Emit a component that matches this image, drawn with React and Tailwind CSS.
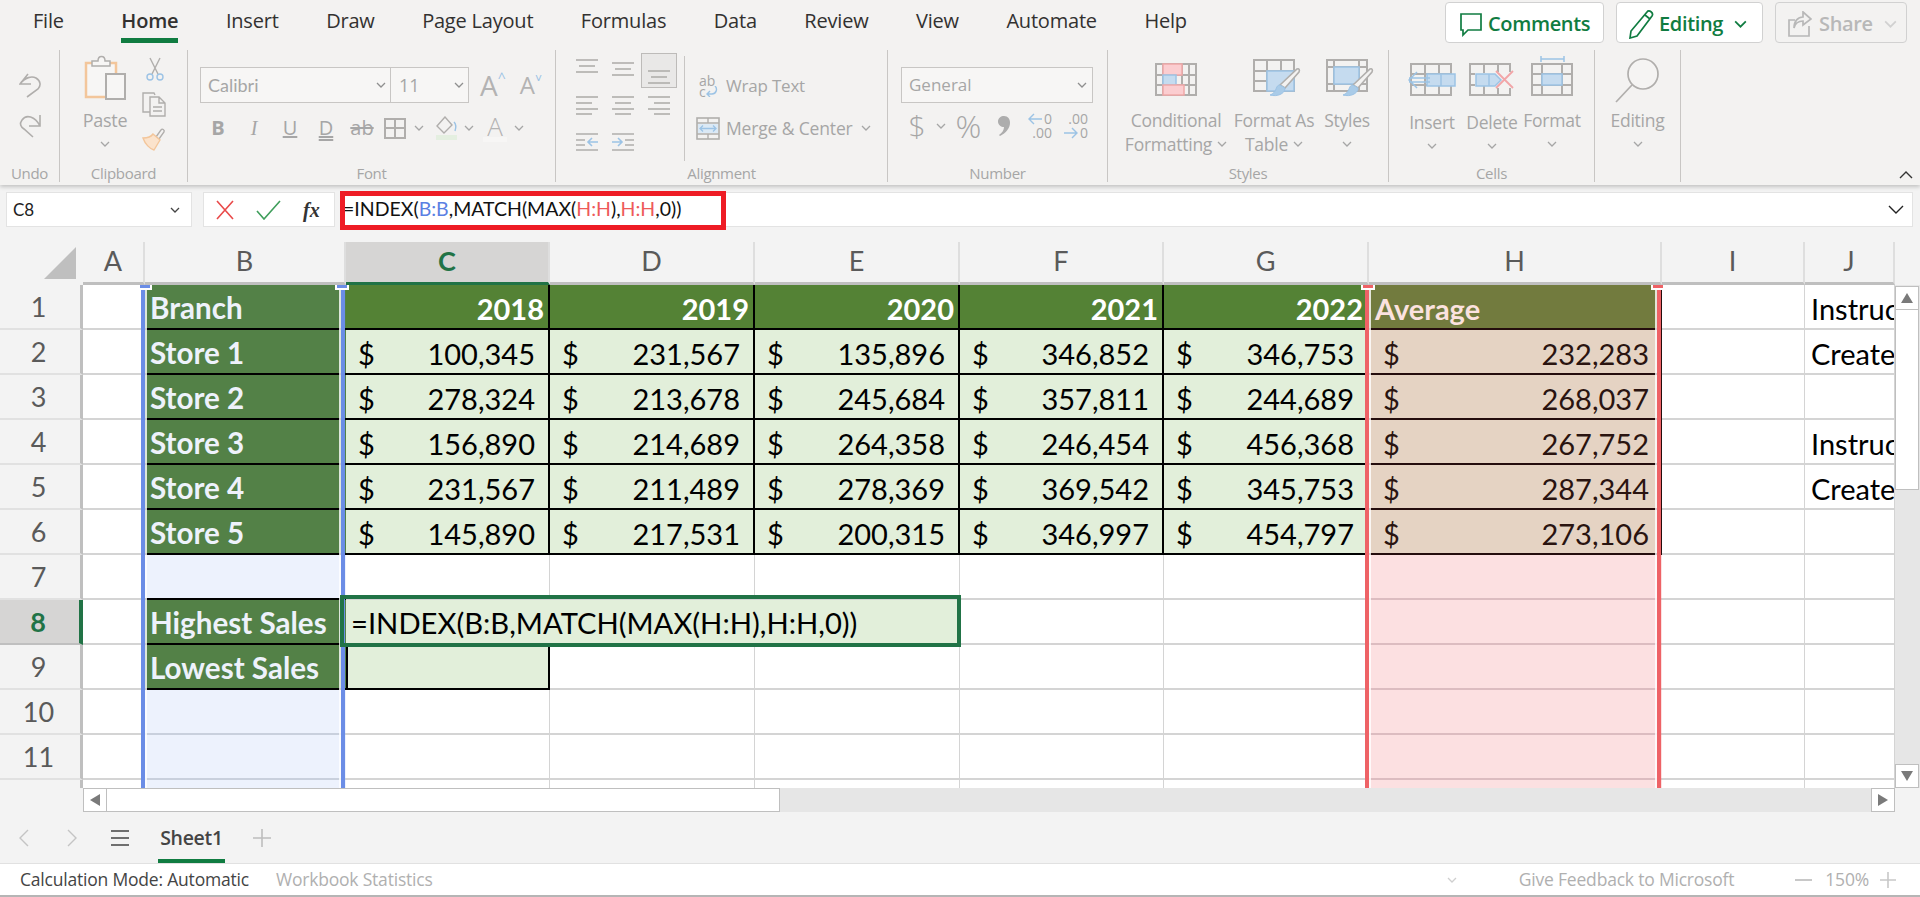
import React from 'react';

const ui = "font-['Open_Sans',sans-serif]";
const gray = '#b0aeac';
const blue = '#9cc3e5';
const blueFill = '#c5dbef';
const pink = '#f0a8a8';
const pinkFill = '#fbcdd0';

const tabs = ['File', 'Home', 'Insert', 'Draw', 'Page Layout', 'Formulas', 'Data', 'Review', 'View', 'Automate', 'Help'];

const stores = [
  ['Store 1', '100,345', '231,567', '135,896', '346,852', '346,753', '232,283'],
  ['Store 2', '278,324', '213,678', '245,684', '357,811', '244,689', '268,037'],
  ['Store 3', '156,890', '214,689', '264,358', '246,454', '456,368', '267,752'],
  ['Store 4', '231,567', '211,489', '278,369', '369,542', '345,753', '287,344'],
  ['Store 5', '145,890', '217,531', '200,315', '346,997', '454,797', '273,106'],
];

function Chevron({ color = '#a6a6a6', w = 10, h = 6 }) {
  return (
    <svg width={w} height={h} viewBox="0 0 10 6" fill="none" stroke={color} strokeWidth="1.3" className="shrink-0">
      <path d="M1 1l4 4 4-4" />
    </svg>
  );
}

function Brush() {
  return (
    <g>
      <path d="M44 10 C46 9 47 11 46 13 L32 29 L27 26 Z" fill="#f3f2f1" stroke={gray} strokeWidth="1.6" />
      <path d="M27 26 L32 29 C32 35 24 38 17 36 C20 35 22 33 23 30 C24 27 25 26 27 26 Z" fill="#a9cbe8" stroke="#9cc3e5" />
    </g>
  );
}

function TableGrid({ v, h }) {
  return (
    <g fill="none" stroke={gray} strokeWidth="2">
      <rect x="1" y="1" width="40" height="31" />
      {v.map((x) => <path key={x} d={`M${x} 1V32`} />)}
      {h.map((y) => <path key={y} d={`M1 ${y}H41`} />)}
    </g>
  );
}

function CondFormat() {
  return (
    <svg width="42" height="34" viewBox="0 0 42 34">
      <TableGrid v={[8, 27, 34]} h={[12, 22]} />
      <rect x="8" y="1" width="19" height="11" fill={pinkFill} stroke={pink} strokeWidth="1.5" />
      <rect x="8" y="12" width="13" height="10" fill={blueFill} stroke={blue} strokeWidth="1.5" />
      <rect x="8" y="22" width="21" height="10" fill={pinkFill} stroke={pink} strokeWidth="1.5" />
    </svg>
  );
}

function FormatTable() {
  return (
    <svg width="48" height="38" viewBox="0 0 48 38">
      <TableGrid v={[14, 28]} h={[12, 22]} />
      <rect x="14" y="12" width="27" height="20" fill={blueFill} stroke={blue} strokeWidth="1.5" />
      <Brush />
    </svg>
  );
}

function CellStyles() {
  return (
    <svg width="48" height="38" viewBox="0 0 48 38">
      <TableGrid v={[8, 33]} h={[8, 25]} />
      <rect x="8" y="8" width="25" height="17" fill={blueFill} stroke={blue} strokeWidth="1.5" />
      <Brush />
    </svg>
  );
}

function InsertIcon() {
  return (
    <svg width="48" height="41" viewBox="0 0 48 41">
      <g transform="translate(2 7)"><TableGrid v={[15, 29]} h={[11, 22]} /></g>
      <rect x="19" y="18" width="28" height="12" fill={blueFill} stroke={blue} strokeWidth="1.5" />
      <path d="M33 18V30" stroke={blue} strokeWidth="1.5" />
      <path d="M9 16 L1 24 L9 32 M1 22 H22 M1 26 H22" fill="none" stroke={blue} strokeWidth="1.5" />
    </svg>
  );
}

function DeleteIcon() {
  return (
    <svg width="46" height="41" viewBox="0 0 46 41">
      <g transform="translate(0 7)"><TableGrid v={[15, 29]} h={[11, 22]} /></g>
      <rect x="6" y="17" width="32" height="13" fill="#f3f2f1" />
      <rect x="28" y="16" width="15" height="16" fill="#f3f2f1" />
      <path d="M7 18 H26 L32 24 L26 30 H7 Z" fill={blueFill} stroke={blue} strokeWidth="1.5" />
      <path d="M20 18V30" stroke={blue} strokeWidth="1.5" />
      <path d="M27 15 L44 32 M44 15 L27 32" stroke="#f2a5a7" strokeWidth="1.8" />
    </svg>
  );
}

function FormatIcon() {
  return (
    <svg width="42" height="41" viewBox="0 0 42 41">
      <path d="M10 3H33 M10 0V6 M33 0V6" stroke={blue} strokeWidth="1.5" />
      <g transform="translate(0 7)"><TableGrid v={[11, 31]} h={[11, 22]} /></g>
      <rect x="11" y="18" width="20" height="11" fill={blueFill} stroke={blue} strokeWidth="1.5" />
    </svg>
  );
}

function AlignIcon({ lines }) {
  return (
    <svg width="22" height="20" viewBox="0 0 22 20" fill="none" stroke={gray} strokeWidth="1.6">
      {lines.map((l, i) => <path key={i} d={`M${l[0]} ${l[2]}H${l[1]}`} />)}
    </svg>
  );
}

function Group({ w, label, children, pad }) {
  return (
    <div className={`${w} h-[132px] flex flex-col border-r border-[#c8c6c4] shrink-0`}>
      <div className={`h-[115px] flex ${pad}`}>{children}</div>
      <div className="h-[17px] text-center text-[15px] leading-[17px] tracking-[-0.3px] text-[#a6a6a6]">{label}</div>
    </div>
  );
}

function BigButton({ icon, lines, w, top = 'mt-[11px]', iconH = 'h-[41px]' }) {
  return (
    <div className={`${w} flex flex-col items-center text-[#a6a6a6]`}>
      <div className={`${iconH} flex items-end`}>{icon}</div>
      <div className={`${top} flex flex-col items-center text-[17.5px] leading-[24px] tracking-[-0.25px] whitespace-nowrap`}>
        {lines.map((l, i) => <span key={i} className="h-[24px] flex items-center gap-[5px]">{l}</span>)}
      </div>
    </div>
  );
}

function Ribbon() {
  return (
    <div className="h-[132px] flex relative z-10">
      <Group w="w-[60px]" label="Undo" pad="pl-[19px] pt-[23px] flex-col">
        <svg width="23" height="25" viewBox="0 0 23 25" fill="none" stroke={gray} strokeWidth="1.6">
          <path d="M9 1L1 11L12 11M1 11C6 4 13 3 17 5C22 8 22 13 19 16L8 24" />
        </svg>
        <svg className="mt-[15px]" width="23" height="25" viewBox="0 0 23 25" fill="none" stroke={gray} strokeWidth="1.6">
          <path d="M21 2L21 13L10 13M21 13C16 3 7 1 3 7C0 11 2 14 5 16L14 24" />
        </svg>
      </Group>

      <Group w="w-[128px]" label="Clipboard" pad="">
        <div className="ml-[22px] w-[46px] flex flex-col items-center pt-[5px] text-[#a6a6a6]">
          <svg width="42" height="45" viewBox="0 0 42 45">
            <rect x="2" y="8" width="30" height="34" fill="#f7f6f5" stroke="#f3c69b" strokeWidth="2.5" />
            <path d="M8 6 H14 C14 0 21 0 21 6 H26 V11 H8 Z" fill="#f7f6f5" stroke={gray} strokeWidth="1.5" />
            <rect x="22" y="19" width="19" height="25" fill="#f7f6f5" stroke={gray} strokeWidth="2" />
          </svg>
          <span className="mt-[8px] text-[18px] leading-[24px] tracking-[-0.3px]">Paste</span>
          <span className="mt-[9px]"><Chevron /></span>
        </div>
        <div className="ml-[14px] flex flex-col items-center pt-[7px]">
          <svg width="18" height="24" viewBox="0 0 18 24" fill="none" strokeWidth="1.4">
            <path d="M4 1L12 17M14 1L6 17" stroke={gray} />
            <circle cx="4" cy="20" r="3" stroke={blue} />
            <circle cx="14" cy="20" r="3" stroke={blue} />
          </svg>
          <svg className="mt-[11px]" width="25" height="25" viewBox="0 0 25 25" fill="none" stroke={gray} strokeWidth="1.4">
            <path d="M8 20H1V1H12L13 3M8 5H17L23 11V24H8Z M17 5V11H23 M11 15H20 M11 19H20" />
          </svg>
          <svg className="mt-[10px]" width="25" height="24" viewBox="0 0 25 24" fill="none">
            <path d="M14 10L19 3C20 1 23 3 22 5L17 12L14 10Z" stroke={gray} strokeWidth="1.4" />
            <path d="M11 7L18 13L12 23C8 22 3 17 1 11C5 11 9 10 11 7Z" fill="#fbe3cc" stroke="#f3c69b" strokeWidth="1.4" />
          </svg>
        </div>
      </Group>

      <Group w="w-[368px]" label="Font" pad="flex-col pl-[12px] pt-[17px]">
        <div className="flex items-center">
          <div className="w-[269px] h-[36px] flex border border-[#c8c6c4] bg-[#f7f6f5] text-[18px] text-[#a6a6a6]">
            <div className="w-[190px] flex items-center justify-between pl-[7px] pr-[4px] border-r border-[#c8c6c4]">
              <span className="font-['Lato',sans-serif]">Calibri</span><Chevron color="#8f8f8f" />
            </div>
            <div className="flex-1 flex items-center justify-between pl-[8px] pr-[4px]">
              <span>11</span><Chevron color="#8f8f8f" />
            </div>
          </div>
          <span className="ml-[11px] flex text-[28px] leading-none text-[#b3b3b3]">A<span className="text-[14px] text-[#9cc3e5]">^</span></span>
          <span className="ml-[14px] flex text-[24px] leading-none text-[#b3b3b3]">A<span className="text-[12px] text-[#9cc3e5]">˅</span></span>
        </div>
        <div className="mt-[13px] flex items-center text-[#a6a6a6] h-[24px] text-[20px]">
          <span className="w-[36px] text-center font-bold">B</span>
          <span className="w-[36px] text-center italic font-['Liberation_Serif',serif]">I</span>
          <span className="w-[36px] text-center underline">U</span>
          <span className="w-[36px] text-center underline decoration-double">D</span>
          <span className="w-[36px] text-center line-through">ab</span>
          <svg className="ml-[4px]" width="22" height="21" viewBox="0 0 22 21" fill="none" stroke={gray} strokeWidth="2">
            <rect x="1" y="1" width="20" height="19" /><path d="M11 1V20M1 10H21" />
          </svg>
          <span className="ml-[8px]"><Chevron /></span>
          <svg className="ml-[12px]" width="22" height="24" viewBox="0 0 22 24" fill="none">
            <path d="M9 1L1 10L8 17L16 9Z" stroke={gray} strokeWidth="1.4" />
            <path d="M18 6C20 8 20 12 19 15" stroke={blue} strokeWidth="1.4" />
            <rect x="0" y="19" width="21" height="5" fill="#e4efe0" />
          </svg>
          <span className="ml-[6px]"><Chevron /></span>
          <span className="ml-[9px] w-[24px] flex flex-col items-center text-[26px] leading-[22px] font-light text-[#b3b3b3]">A<span className="w-[24px] h-[5px] bg-[#f7f6f5]" /></span>
          <span className="ml-[7px]"><Chevron /></span>
        </div>
      </Group>

      <Group w="w-[332px]" label="Alignment" pad="">
        <div className="ml-[13px] mt-[3px] w-[108px] grid grid-cols-3 grid-rows-[37px_37px_37px] h-[111px]">
          <div className="flex justify-center pt-[3px]"><AlignIcon lines={[[0, 22, 4], [3, 19, 10], [0, 22, 16]]} /></div>
          <div className="flex justify-center pt-[7px]"><AlignIcon lines={[[0, 22, 3], [3, 19, 9], [0, 22, 15]]} /></div>
          <div className="flex justify-center items-end h-[35px] bg-[#e9e8e7] border border-[#bdbbb9] pb-[1px]"><AlignIcon lines={[[0, 22, 5], [3, 19, 11], [0, 22, 17]]} /></div>
          <div className="flex justify-center pt-[5px]"><AlignIcon lines={[[0, 22, 2], [0, 16, 8], [0, 22, 14], [0, 16, 19]]} /></div>
          <div className="flex justify-center pt-[5px]"><AlignIcon lines={[[0, 22, 2], [3, 19, 8], [0, 22, 14], [3, 19, 19]]} /></div>
          <div className="flex justify-center pt-[5px]"><AlignIcon lines={[[0, 22, 2], [6, 22, 8], [0, 22, 14], [6, 22, 19]]} /></div>
          <div className="flex justify-center pt-[5px]">
            <svg width="22" height="20" viewBox="0 0 22 20" fill="none" strokeWidth="1.6">
              <path d="M0 2H22M0 8H9M0 13H9M0 18H22" stroke={gray} />
              <path d="M22 10H12M16 6L12 10L16 14" stroke={blue} />
            </svg>
          </div>
          <div className="flex justify-center pt-[5px]">
            <svg width="22" height="20" viewBox="0 0 22 20" fill="none" strokeWidth="1.6">
              <path d="M0 2H22M13 8H22M13 13H22M0 18H22" stroke={gray} />
              <path d="M0 10H10M6 6L10 10L6 14" stroke={blue} />
            </svg>
          </div>
        </div>
        <div className="ml-[7px] mt-[6px] h-[105px] border-l border-[#c8c6c4]" />
        <div className="ml-[11px] flex flex-col text-[17px] tracking-[-0.2px] text-[#a6a6a6]">
          <div className="mt-[20px] h-[32px] flex items-center whitespace-nowrap">
            <div className="ml-[3px] mr-[6px] w-[21px] flex flex-col text-[14px] leading-[11px] tracking-normal">
              <span>ab</span>
              <div className="flex items-end">
                <span>c</span>
                <svg width="12" height="11" viewBox="0 0 12 11" fill="none" stroke={blue} strokeWidth="1.4">
                  <path d="M9 0C12 3 10 8 6 8H1M4 5L1 8L4 11" />
                </svg>
              </div>
            </div>
            Wrap Text
          </div>
          <div className="mt-[10px] h-[32px] flex items-center whitespace-nowrap text-[17.5px] tracking-[-0.15px]">
            <svg className="mr-[6px]" width="24" height="23" viewBox="0 0 24 23" fill="none">
              <rect x="1" y="1" width="22" height="21" stroke={gray} strokeWidth="1.6" />
              <path d="M1 6H23M1 17H23M12 1V6M12 17V22" stroke={gray} strokeWidth="1.4" />
              <rect x="2" y="7" width="20" height="9" fill="#dbe9f5" />
              <path d="M4 11.5H20M7 8.5L4 11.5L7 14.5M17 8.5L20 11.5L17 14.5" stroke={blue} strokeWidth="1.3" />
            </svg>
            Merge & Center
            <span className="ml-[8px]"><Chevron /></span>
          </div>
        </div>
      </Group>

      <Group w="w-[220px]" label="Number" pad="flex-col pl-[13px] pt-[17px]">
        <div className="w-[192px] h-[36px] flex items-center justify-between pl-[7px] pr-[5px] border border-[#c8c6c4] bg-[#f7f6f5] text-[17px] text-[#a6a6a6]">
          <span>General</span><Chevron color="#8f8f8f" />
        </div>
        <div className="mt-[8px] flex items-center h-[30px] text-[#a6a6a6]">
          <span className="w-[24px] ml-[4px] text-center text-[30px] font-light leading-none">$</span>
          <span className="ml-[7px]"><Chevron /></span>
          <span className="ml-[5px] w-[35px] text-center text-[32px] font-light leading-none">%</span>
          <svg className="ml-[12px]" width="12" height="20" viewBox="0 0 12 20"><path d="M6 0C10 0 12 3 12 7C12 12 8 17 2 20L1 19C4 17 6 14 6 11C3 11 0 9 0 5.500C0 2 3 0 6 0Z" fill="#adadad" /></svg>
          <div className="ml-[18px] w-[24px] flex flex-col text-[14px] leading-[14px]">
            <div className="flex items-center justify-end">
              <svg className="mr-[2px]" width="14" height="12" viewBox="0 0 14 12" fill="none" stroke={blue} strokeWidth="1.4"><path d="M14 6H1M6 1L1 6L6 11" /></svg>
              <span>0</span>
            </div>
            <span className="text-right">.00</span>
          </div>
          <div className="ml-[12px] w-[24px] flex flex-col text-[14px] leading-[14px]">
            <span className="text-right">.00</span>
            <div className="flex items-center justify-end">
              <svg className="mr-[2px]" width="14" height="12" viewBox="0 0 14 12" fill="none" stroke={blue} strokeWidth="1.4"><path d="M0 6H13M8 1L13 6L8 11" /></svg>
              <span>0</span>
            </div>
          </div>
        </div>
      </Group>

      <Group w="w-[281px]" label="Styles" pad="pl-[16px] pt-[6px]">
        <BigButton w="w-[104px]" icon={<CondFormat />} lines={['Conditional', <>Formatting <Chevron /></>]} />
        <BigButton w="w-[92px]" icon={<span className="pl-[6px]"><FormatTable /></span>} lines={['Format As', <>Table <Chevron /></>]} />
        <BigButton w="w-[54px]" icon={<span className="pl-[6px]"><CellStyles /></span>} lines={['Styles', <Chevron />]} />
      </Group>

      <Group w="w-[206px]" label="Cells" pad="pl-[13px] pt-[6px]">
        <BigButton w="w-[60px]" icon={<InsertIcon />} lines={['Insert', <Chevron />]} top="mt-[13px]" />
        <BigButton w="w-[60px]" icon={<DeleteIcon />} lines={['Delete', <Chevron />]} top="mt-[13px]" />
        <BigButton w="w-[60px]" icon={<FormatIcon />} lines={['Format', <Chevron />]} />
      </Group>

      <Group w="w-[86px]" label="" pad="pt-[8px]">
        <div className="w-full flex flex-col items-center text-[#a6a6a6]">
          <svg width="46" height="45" viewBox="0 0 46 45" fill="none" stroke={gray} strokeWidth="1.7">
            <circle cx="28" cy="16" r="15" fill="#f5f4f3" /><path d="M17 27L1 44" />
          </svg>
          <div className="mt-[5px] flex flex-col items-center text-[17.5px] leading-[24px] tracking-[-0.25px]">
            <span className="h-[24px]">Editing</span>
            <span className="h-[24px] flex items-center"><Chevron /></span>
          </div>
        </div>
      </Group>

      <div className="flex-1 flex items-end justify-end pr-[7px] pb-[3px]">
        <svg width="14" height="8" viewBox="0 0 14 8" fill="none" stroke="#333" strokeWidth="1.4"><path d="M1 7l6-6 6 6" /></svg>
      </div>
    </div>
  );
}

function TopBar() {
  return (
    <div className="h-[50px] flex justify-between items-start">
      <div className="flex pl-[33px] gap-[47.5px] text-[20px] text-[#323130] tracking-[-0.2px]">
        {tabs.map((t) => (
          <div key={t} className={`h-[43px] pt-[3px] flex items-center border-b-[5px] whitespace-nowrap ${t === 'Home' ? 'ml-[10px] border-[#107c41] font-semibold' : 'border-transparent'}`}>{t}</div>
        ))}
      </div>
      <div className="flex gap-[12px] pt-[2px] pr-[13px] text-[20px] font-semibold tracking-[-0.35px]">
        <button className="w-[159px] h-[41px] pt-[3px] flex items-center pl-[14px] gap-[6px] bg-white border border-[#d1d1d1] rounded-[4px] text-[#107c41]">
          <svg width="22" height="26" viewBox="0 0 22 26" fill="none" stroke="#107c41" strokeWidth="1.7"><path d="M1 3H21V19H8L3 24V19H1Z" /></svg>
          Comments
        </button>
        <button className="w-[147px] h-[41px] pt-[3px] flex items-center pl-[12px] gap-[5px] bg-white border border-[#d1d1d1] rounded-[4px] text-[#107c41]">
          <svg width="25" height="30" viewBox="0 0 25 30" fill="none" stroke="#107c41" strokeWidth="1.7"><path d="M18 3C20 0 25 4 23 7L8 27L1 29L2 22Z M16 6L21 10" /></svg>
          Editing
          <span className="ml-[5px]"><Chevron color="#107c41" w={15} h={8} /></span>
        </button>
        <button className="w-[132px] h-[41px] pt-[3px] flex items-center pl-[12px] gap-[7px] border border-[#d1d1d1] rounded-[4px] text-[#b8b8b8]">
          <svg width="24" height="26" viewBox="0 0 24 26" fill="none" stroke="#b8b8b8" strokeWidth="1.7"><path d="M7 9H1V25H21V15 M15 1L23 8L15 14V10C10 10 7 13 6 17C6 10 10 6 15 6Z" /></svg>
          Share
          <span className="ml-[3px]"><Chevron color="#d1d1d1" w={15} h={8} /></span>
        </button>
      </div>
    </div>
  );
}

function FormulaBar() {
  return (
    <div className="h-[57px] flex pt-[7px] pl-[6px] pr-[7px] bg-[#f3f3f3]">
      <div className="w-[186px] h-[35px] flex items-center justify-between pl-[6px] pr-[11px] bg-white border border-[#e3e3e3] font-['Lato',sans-serif] text-[17px] text-[#222]">
        C8
        <Chevron color="#444" />
      </div>
      <div className="ml-[11px] w-[132px] h-[35px] flex items-center bg-white border border-[#e3e3e3]">
        <svg className="ml-[11px]" width="20" height="20" viewBox="0 0 20 20" fill="none" stroke="#e94a4a" strokeWidth="1.6"><path d="M2 1L18 19M18 1L2 19" /></svg>
        <svg className="ml-[21px]" width="25" height="20" viewBox="0 0 25 20" fill="none" stroke="#3f9e5b" strokeWidth="1.6"><path d="M1 11L8 19L24 1" /></svg>
        <span className="ml-[22px] italic font-semibold text-[20px] text-[#333] font-['Liberation_Serif',serif]">fx</span>
      </div>
      <div className="ml-[5px] flex-1 h-[35px] flex items-center justify-between relative bg-white border border-[#e3e3e3] pr-[8px]">
        <span className="pl-[2px] pb-[1px] font-['Lato',sans-serif] text-[19.5px] text-[#111] whitespace-nowrap">
          =INDEX(<span className="text-[#5b80e3]">B:B</span>,MATCH(MAX(<span className="text-[#ee5a5a]">H:H</span>),<span className="text-[#ee5a5a]">H:H</span>,0))
        </span>
        <svg width="16" height="9" viewBox="0 0 16 9" fill="none" stroke="#222" strokeWidth="1.4"><path d="M1 1l7 7 7-7" /></svg>
        <div className="absolute -left-[1px] -top-[2px] w-[386px] h-[39px] border-[5px] border-[#ee1c25]" />
      </div>
    </div>
  );
}

function ColHeaders() {
  const cols = [
    ['A', 'w-[62px]'], ['B', 'w-[201px]'], ['C', 'w-[204px]'], ['D', 'w-[205px]'], ['E', 'w-[205px]'],
    ['F', 'w-[204px]'], ['G', 'w-[205px]'], ['H', 'w-[293px]'], ['I', 'w-[143px]'], ['J', 'w-[90px]'],
  ];
  return (
    <div className="h-[43px] flex bg-[#f3f3f3] font-['Lato',sans-serif] text-[27px] text-[#5a5a5a]">
      <div className="w-[83px] flex justify-end pr-[7px] pt-[5px] border-b-0">
        <svg width="32" height="32" viewBox="0 0 32 32"><path d="M32 0V32H0Z" fill="#bfbfbf" /></svg>
      </div>
      {cols.map(([c, w]) => (
        <div key={c} className={`${w} flex items-center justify-center pb-[2px] border-b-[3px] ${c === 'C' ? 'bg-[#d6d5d4] border-[#217346] text-[#217346] font-bold' : 'border-[#bfbfbf]'} border-r-2 border-r-[#dedede]`}>{c}</div>
      ))}
      <div className="w-[25px]" />
    </div>
  );
}

function RowHeaders() {
  const nums = [1, 2, 3, 4, 5, 6, 7, 8, 9, 10, 11, ''];
  return (
    <div className="w-[83px] shrink-0 overflow-hidden font-['Lato',sans-serif] text-[27px] text-[#5a5a5a] bg-[#f3f3f3]">
      {nums.map((n) => (
        <div key={n} className={`h-[45px] pt-[2px] flex items-center justify-center border-b-2 pr-[3px] ${n === 8 ? 'bg-[#d6d5d4] text-[#217346] font-bold border-r-4 border-r-[#217346] border-b-[#bfbfbf]' : 'border-r-[3px] border-r-[#bfbfbf] border-b-[#e1e1e1]'}`}>{n}</div>
      ))}
    </div>
  );
}

const plain = 'h-[45px] border-r border-b-2 border-[#d4d4d4]';
const body = 'h-[45px] pl-[12px] pr-[13px] pt-[4px] flex items-center justify-between bg-[#e2efda] border-r-2 border-b-2 border-black text-black';
const head = 'h-[45px] pr-[4px] pt-[4px] flex items-center justify-end bg-[#548235] border-r-2 border-b-2 border-black text-white font-bold';
const branch = 'h-[45px] pl-[5px] pt-[4px] flex items-center bg-[#538147] border-b-2 border-black text-[#eef2fb] text-[29.600px] font-bold whitespace-nowrap';
const paleB = 'h-[45px] border-b-2 border-[#c9d0dd] bg-[#edf2fd]';
const paleH = 'h-[45px] border-b-2 border-[#dcbcc0] bg-[#fce0e1]';
const avg = 'h-[45px] pl-[14px] pr-[11px] pt-[4px] flex items-center justify-between bg-[#e5d3c3] border-r-2 border-b-2 border-[#240d0d] text-[#2a1410]';

function TextCell({ text }) {
  return <div className="h-[45px] pl-[6px] pt-[4px] flex items-center overflow-hidden whitespace-nowrap border-r border-b-2 border-[#d4d4d4] text-black">{text}</div>;
}

function Frame({ left, width, color }) {
  return (
    <div className={`absolute top-0 bottom-0 ${left} ${width} border-x-4 ${color} z-10`}>
      <div className="h-full border-x-2 border-white/80" />
    </div>
  );
}

function Handle({ left, color }) {
  return (
    <div className={`absolute top-0 ${left} w-[14px] h-[5px] bg-white z-10 flex justify-center`}>
      <div className={`w-[10px] h-[3px] ${color}`} />
    </div>
  );
}

function Sheet() {
  const j = { 0: 'Instructions', 1: 'Create a table', 3: 'Instructions', 4: 'Create a table' };
  return (
    <div className="relative w-[1812px] overflow-hidden font-['Lato',sans-serif] text-[29px]">
      <div className="grid grid-cols-[62px_201px_204px_205px_205px_204px_205px_293px_143px_90px] auto-rows-[45px]">
        {/* row 1 */}
        <div className={plain} />
        <div className={branch}>Branch</div>
        {['2018', '2019', '2020', '2021', '2022'].map((y) => <div key={y} className={head}>{y}</div>)}
        <div className="h-[45px] pl-[6px] pt-[4px] flex items-center bg-[#727b3e] border-r-2 border-b-2 border-[#240d0d] text-[#fbe2df] font-bold">Average</div>
        <div className={plain} />
        <TextCell text={j[0]} />

        {/* rows 2-6 */}
        {stores.map((s, i) => (
          <React.Fragment key={s[0]}>
            <div className={plain} />
            <div className={branch}>{s[0]}</div>
            {s.slice(1, 6).map((v, k) => (
              <div key={k} className={body}><span>$</span><span>{v}</span></div>
            ))}
            <div className={avg}><span>$</span><span>{s[6]}</span></div>
            <div className={plain} />
            {j[i + 1] ? <TextCell text={j[i + 1]} /> : <div className={plain} />}
          </React.Fragment>
        ))}

        {/* row 7 */}
        <div className={plain} />
        <div className="h-[45px] border-b-2 border-black bg-[#edf2fd]" />
        {[0, 1, 2, 3, 4].map((k) => <div key={k} className={plain} />)}
        <div className={paleH} />
        <div className={plain} />
        <div className={plain} />

        {/* row 8 */}
        <div className={plain} />
        <div className={branch}>Highest Sales</div>
        <div className="col-span-3 h-[45px] pl-[5px] flex items-center bg-[#e2efda] text-[29.200px] text-black whitespace-nowrap">=INDEX(B:B,MATCH(MAX(H:H),H:H,0))</div>
        <div className={plain} />
        <div className={plain} />
        <div className={paleH} />
        <div className={plain} />
        <div className={plain} />

        {/* row 9 */}
        <div className={plain} />
        <div className={branch}>Lowest Sales</div>
        <div className="h-[45px] bg-[#e2efda] border-l-2 border-r-2 border-b-2 border-black" />
        {[0, 1, 2, 3].map((k) => <div key={k} className={plain} />)}
        <div className={paleH} />
        <div className={plain} />
        <div className={plain} />

        {/* rows 10-12 */}
        {[10, 11, 12].map((r) => (
          <React.Fragment key={r}>
            <div className={plain} />
            <div className={paleB} />
            {[0, 1, 2, 3, 4].map((k) => <div key={k} className={plain} />)}
            <div className={paleH} />
            <div className={plain} />
            <div className={plain} />
          </React.Fragment>
        ))}
      </div>

      <Frame left="left-[58px]" width="w-[204px]" color="border-[#6b8de6]" />
      <Frame left="left-[1282px]" width="w-[296px]" color="border-[#ee6266]" />
      <Handle left="left-[55px]" color="bg-[#6b8de6]" />
      <Handle left="left-[252px]" color="bg-[#6b8de6]" />
      <Handle left="left-[1278px]" color="bg-[#ee6266]" />
      <Handle left="left-[1568px]" color="bg-[#ee6266]" />
      <div className="absolute left-[257px] top-[310px] w-[621px] h-[52px] border-4 border-[#217346] z-20" />
    </div>
  );
}

function ScrollBtn({ d, className }) {
  return (
    <div className={`w-[24px] h-[24px] shrink-0 flex items-center justify-center bg-white border border-[#bfbfbf] ${className}`}>
      <svg width="12" height="12" viewBox="0 0 12 12"><path d={d} fill="#7a7a7a" /></svg>
    </div>
  );
}

function VScroll() {
  return (
    <div className="w-[25px] pt-[1px] flex flex-col bg-[#e6e6e6]">
      <ScrollBtn d="M6 1L12 11H0Z" />
      <div className="w-[24px] h-[180px] bg-white border border-t-0 border-[#bfbfbf]" />
      <div className="flex-1" />
      <ScrollBtn d="M0 1H12L6 11Z" />
    </div>
  );
}

function HScroll() {
  return (
    <div className="h-[24px] flex bg-[#f3f3f3]">
      <div className="w-[83px]" />
      <ScrollBtn d="M11 0V12L1 6Z" />
      <div className="w-[673px] bg-white border border-l-0 border-[#bfbfbf]" />
      <div className="w-[1091px] bg-[#e6e6e6]" />
      <ScrollBtn d="M1 0V12L11 6Z" />
    </div>
  );
}

function SheetTabs() {
  return (
    <div className="h-[51px] flex items-center bg-[#f3f3f3] text-[#bdbdbd]">
      <svg className="ml-[19px]" width="10" height="18" viewBox="0 0 10 18" fill="none" stroke="#c4c4c4" strokeWidth="1.4"><path d="M9 1L1 9l8 8" /></svg>
      <svg className="ml-[38px]" width="10" height="18" viewBox="0 0 10 18" fill="none" stroke="#c4c4c4" strokeWidth="1.4"><path d="M1 1l8 8-8 8" /></svg>
      <svg className="ml-[34px]" width="18" height="16" viewBox="0 0 18 16" fill="none" stroke="#444" strokeWidth="1.6"><path d="M0 1H18M0 8H18M0 15H18" /></svg>
      <div className="ml-[29px] w-[67px] h-[51px] flex items-center justify-center border-b-[4px] border-[#107c41] pt-[4px] font-semibold text-[19.500px] tracking-[-0.3px] text-[#444]">Sheet1</div>
      <svg className="ml-[28px]" width="18" height="18" viewBox="0 0 18 18" fill="none" stroke="#bdbdbd" strokeWidth="1.6"><path d="M9 0V18M0 9H18" /></svg>
    </div>
  );
}

function StatusBar() {
  return (
    <div className="h-[34px] flex items-center bg-white border-t border-[#e1e1e1] border-b-2 border-b-[#b5b5b5] text-[17.500px] tracking-[-0.2px]">
      <span className="ml-[20px] text-[#444]">Calculation Mode: Automatic</span>
      <span className="ml-[27px] text-[#b0b0b0]">Workbook Statistics</span>
      <span className="ml-auto"><Chevron color="#cfcfcf" /></span>
      <span className="ml-[62px] text-[#b0b0b0]">Give Feedback to Microsoft</span>
      <span className="ml-[61px] w-[17px] h-[2px] bg-[#c8c8c8]" />
      <span className="ml-[13px] text-[#b0b0b0]">150%</span>
      <svg className="ml-[11px] mr-[24px]" width="16" height="16" viewBox="0 0 16 16" fill="none" stroke="#c8c8c8" strokeWidth="1.6"><path d="M8 0V16M0 8H16" /></svg>
    </div>
  );
}

export default function App() {
  return (
    <div className={`w-[1920px] h-[897px] overflow-hidden bg-[#f3f3f3] ${ui}`}>
      <div className="h-[185px] bg-[#f3f2f1] relative z-10 shadow-[0_2px_4px_rgba(0,0,0,0.2)]">
        <TopBar />
        <Ribbon />
      </div>
      <FormulaBar />
      <ColHeaders />
      <div className="h-[503px] flex bg-white">
        <RowHeaders />
        <Sheet />
        <VScroll />
      </div>
      <HScroll />
      <SheetTabs />
      <StatusBar />
    </div>
  );
}
